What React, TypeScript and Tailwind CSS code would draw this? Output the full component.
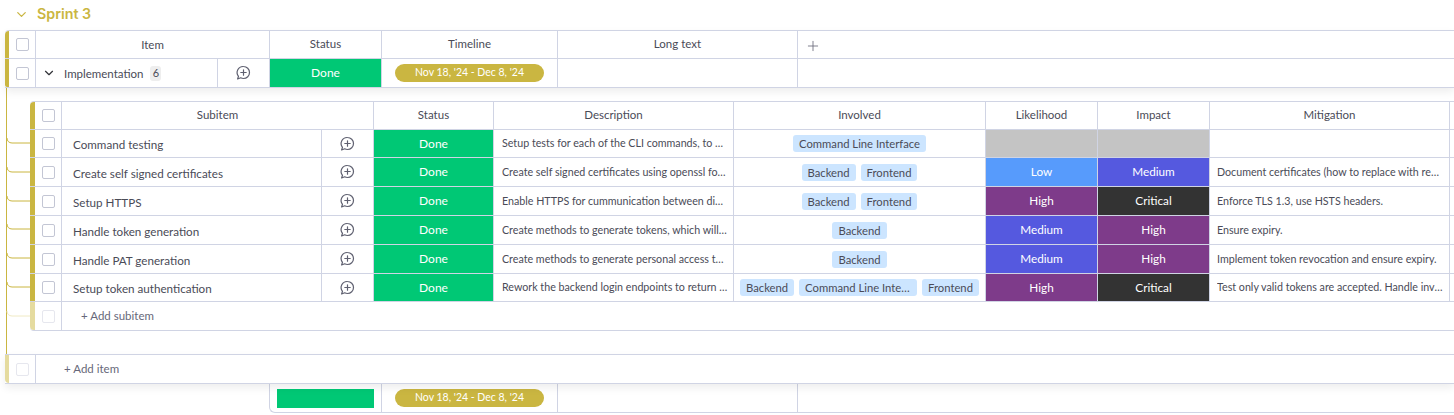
import type { ReactNode } from 'react';
import { ChevronDown, Plus } from 'lucide-react';

const line = 'border-[#d0d4e4]';

type Sub = {
  name: string;
  desc: string;
  tags: string[];
  likelihood: string;
  impact: string;
  mitigation: string;
  height: string;
};

const subitems: Sub[] = [
  { name: 'Command testing', desc: 'Setup tests for each of the CLI commands, to ensure they work as intended', tags: ['Command Line Interface'], likelihood: '', impact: '', mitigation: '', height: 'h-[28px]' },
  { name: 'Create self signed certificates', desc: 'Create self signed certificates using openssl for development and testing', tags: ['Backend', 'Frontend'], likelihood: 'Low', impact: 'Medium', mitigation: 'Document certificates (how to replace with real ones in production)', height: 'h-[29px]' },
  { name: 'Setup HTTPS', desc: 'Enable HTTPS for cummunication between different services in the system', tags: ['Backend', 'Frontend'], likelihood: 'High', impact: 'Critical', mitigation: 'Enforce TLS 1.3, use HSTS headers.', height: 'h-[29px]' },
  { name: 'Handle token generation', desc: 'Create methods to generate tokens, which will be used for authentication', tags: ['Backend'], likelihood: 'Medium', impact: 'High', mitigation: 'Ensure expiry.', height: 'h-[29px]' },
  { name: 'Handle PAT generation', desc: 'Create methods to generate personal access tokens for the command line', tags: ['Backend'], likelihood: 'Medium', impact: 'High', mitigation: 'Implement token revocation and ensure expiry.', height: 'h-[29px]' },
  { name: 'Setup token authentication', desc: 'Rework the backend login endpoints to return tokens instead of sessions', tags: ['Backend', 'Command Line Interface', 'Frontend'], likelihood: 'High', impact: 'Critical', mitigation: 'Test only valid tokens are accepted. Handle invalid tokens gracefully.', height: 'h-[28px]' },
];

const levelColor: Record<string, string> = {
  '': 'bg-[#c4c4c4]',
  Low: 'bg-[#579bfc]',
  Medium: 'bg-[#5559df]',
  High: 'bg-[#7e3b8a]',
  Critical: 'bg-[#333333]',
};

function Checkbox({ faded }: { faded?: boolean }) {
  return (
    <span className={`block h-[13px] w-[13px] rounded-[2px] border ${faded ? 'border-[#e6e7ee]' : 'border-[#c3c6d4]'}`} />
  );
}

function Cell({ w, children, className = '' }: { w: string; children?: ReactNode; className?: string }) {
  return (
    <div className={`flex h-full shrink-0 items-center justify-center border-r ${line} ${w} ${className}`}>
      {children}
    </div>
  );
}

function AddUpdate() {
  return (
    <svg width="16" height="16" viewBox="0 0 16 16" fill="none" stroke="#5f6070" strokeWidth="1.2" strokeLinecap="round" strokeLinejoin="round">
      <path d="M8.5 1.5a6 6 0 0 1 0 12c-1 0-2-.2-2.8-.7L2.6 14l.9-2.7A6 6 0 0 1 8.5 1.5z" />
      <path d="M8.5 4.8v5.4M5.8 7.5h5.4" />
    </svg>
  );
}

function Pill() {
  return (
    <span className="flex h-[18px] w-[149px] items-center justify-center rounded-full bg-[#cab641] text-[10.5px] text-white">
      Nov 18, '24 - Dec 8, '24
    </span>
  );
}

function Tag({ label, clip }: { label: string; clip?: boolean }) {
  return (
    <span className={`block h-[17px] truncate rounded-[3px] bg-[#cce5ff] px-[6px] text-[11.25px] leading-[17px] text-[#4a4b57] ${clip ? 'max-w-[118px]' : ''}`}>
      {label}
    </span>
  );
}

function SubRow({ item }: { item: Sub }) {
  return (
    <div className={`flex ${item.height} border-b ${line}`}>
      <div className="w-[5px] shrink-0 bg-[#cab641]" />
      <Cell w="w-[27px]"><Checkbox /></Cell>
      <Cell w="w-[260px]" className="justify-start pl-[11px] pt-[3px] text-[11.65px]">{item.name}</Cell>
      <Cell w="w-[52px]" className="pr-[2px]"><AddUpdate /></Cell>
      <Cell w="w-[120px]" className="bg-[#00c875] text-[12px] text-white">Done</Cell>
      <Cell w="w-[240px]" className="justify-start pl-[8px] pr-[5px] text-[10.7px]">
        <span className="block w-full truncate">{item.desc}</span>
      </Cell>
      <Cell w="w-[252px]" className="gap-[5px]">
        {item.tags.map((t) => (
          <Tag key={t} label={t} clip={item.tags.length > 1} />
        ))}
      </Cell>
      <Cell w="w-[112px]" className={`${levelColor[item.likelihood]} text-[11.75px] text-white`}>{item.likelihood}</Cell>
      <Cell w="w-[112px]" className={`${levelColor[item.impact]} text-[11.75px] text-white`}>{item.impact}</Cell>
      <Cell w="w-[240px]" className="justify-start pl-[7px] pr-[6px] text-[10.7px]">
        <span className="block w-full truncate">{item.mitigation}</span>
      </Cell>
      <div className="flex-1" />
    </div>
  );
}

function Connectors() {
  const ys = [143, 172, 201, 229, 258, 287];
  return (
    <svg className="absolute left-0 top-0" width="32" height="354" fill="none">
      <path d="M6.5 88V354" stroke="#cab641" strokeWidth="1" />
      {ys.map((y) => (
        <path key={y} d={`M7 ${y - 5}c0 3 2 5 5 5H30`} stroke="#cab641" strokeWidth="1" />
      ))}
      <path d="M7 311c0 3 2 5 5 5H30" stroke="#f0eac4" strokeWidth="1" />
    </svg>
  );
}

export default function App() {
  return (
    <div className="relative h-[415px] w-[1454px] overflow-hidden bg-white font-['Lato',sans-serif] text-[#4a4b57]">
      {/* Group title */}
      <div className="flex h-[30px] items-center gap-[8px] pb-[2px] pl-[14px]">
        <ChevronDown size={15} strokeWidth={2} className="text-[#cab641]" />
        <span className="font-['Inter',sans-serif] text-[14.25px] font-semibold text-[#cab641]">Sprint 3</span>
      </div>

      <div className="relative ml-[5px]">
        {/* Top table */}
        <div className={`relative z-10 rounded-tl-[4px] border-t ${line} bg-white shadow-[0_4px_8px_rgba(0,0,0,0.07)]`}>
          <div className={`flex h-[28px] border-b ${line} text-[11.5px]`}>
            <div className="w-[4px] shrink-0 rounded-tl-[4px] bg-[#cab641]" />
            <Cell w="w-[27px]"><Checkbox /></Cell>
            <Cell w="w-[234px]">Item</Cell>
            <Cell w="w-[112px]" className="pb-[1px]">Status</Cell>
            <Cell w="w-[176px]" className="pb-[1px]">Timeline</Cell>
            <Cell w="w-[240px]" className="pb-[1px]">Long text</Cell>
            <div className="flex flex-1 items-center pl-[7px] pt-[2px]">
              <Plus size={16} strokeWidth={1.25} className="text-[#676879]" />
            </div>
          </div>
          <div className={`flex h-[29px] border-b ${line}`}>
            <div className="w-[4px] shrink-0 rounded-bl-[2px] bg-[#cab641]" />
            <Cell w="w-[27px]"><Checkbox /></Cell>
            <Cell w="w-[182px]" className="justify-start pl-[6px] text-[11.5px]">
              <ChevronDown size={14} strokeWidth={2} className="text-[#323338]" />
              <span className="ml-[8px] pt-[2px]">Implementation</span>
              <span className="ml-[7px] flex h-[15px] w-[11px] items-center justify-center rounded-[3px] bg-[#eeeeee] text-[11px]">6</span>
            </Cell>
            <Cell w="w-[52px]" className="pr-[2px]"><AddUpdate /></Cell>
            <Cell w="w-[112px]" className="bg-[#00c875] text-[12px] text-white">Done</Cell>
            <Cell w="w-[176px]"><Pill /></Cell>
            <Cell w="w-[240px]" />
            <div className="flex-1" />
          </div>
        </div>

        {/* Subitems */}
        <div className="pb-[23px] pl-[25px] pt-[13px]">
          <div className={`rounded-tl-[4px] border-t ${line}`}>
            <div className={`flex h-[28px] border-b ${line} text-[11.5px]`}>
              <div className="w-[5px] shrink-0 rounded-tl-[4px] bg-[#cab641]" />
              <Cell w="w-[27px]"><Checkbox /></Cell>
              <Cell w="w-[312px]" className="pb-[1px]">Subitem</Cell>
              <Cell w="w-[120px]" className="pb-[1px]">Status</Cell>
              <Cell w="w-[240px]" className="pb-[1px]">Description</Cell>
              <Cell w="w-[252px]" className="pb-[1px]">Involved</Cell>
              <Cell w="w-[112px]" className="pb-[1px]">Likelihood</Cell>
              <Cell w="w-[112px]" className="pb-[1px]">Impact</Cell>
              <Cell w="w-[240px]" className="pb-[1px]">Mitigation</Cell>
              <div className="flex-1" />
            </div>
            {subitems.map((item) => (
              <SubRow key={item.name} item={item} />
            ))}
            <div className={`flex h-[29px] rounded-bl-[4px] border-b ${line}`}>
              <div className="w-[5px] shrink-0 rounded-bl-[4px] bg-[#e5db9f]" />
              <Cell w="w-[27px]"><Checkbox faded /></Cell>
              <div className="flex items-center pl-[19px] text-[11.5px] text-[#676879]">+ Add subitem</div>
            </div>
          </div>
        </div>

        {/* Add item */}
        <div className={`relative z-10 flex h-[30px] border-y ${line} bg-white shadow-[0_4px_8px_rgba(0,0,0,0.07)]`}>
          <div className="w-[4px] shrink-0 rounded-bl-[4px] bg-[#e5db9f]" />
          <Cell w="w-[27px]"><Checkbox faded /></Cell>
          <div className="flex items-center pl-[28px] text-[11.5px] text-[#676879]">+ Add item</div>
        </div>

        {/* Column summary */}
        <div className={`ml-[264px] flex h-[29px] rounded-bl-[6px] border-b border-l ${line}`}>
          <Cell w="w-[112px]" className="px-[7px]">
            <span className="block h-[19px] w-full bg-[#00c875]" />
          </Cell>
          <Cell w="w-[176px]"><Pill /></Cell>
          <Cell w="w-[240px]" />
          <div className="flex-1" />
        </div>
      </div>

      <Connectors />
    </div>
  );
}
